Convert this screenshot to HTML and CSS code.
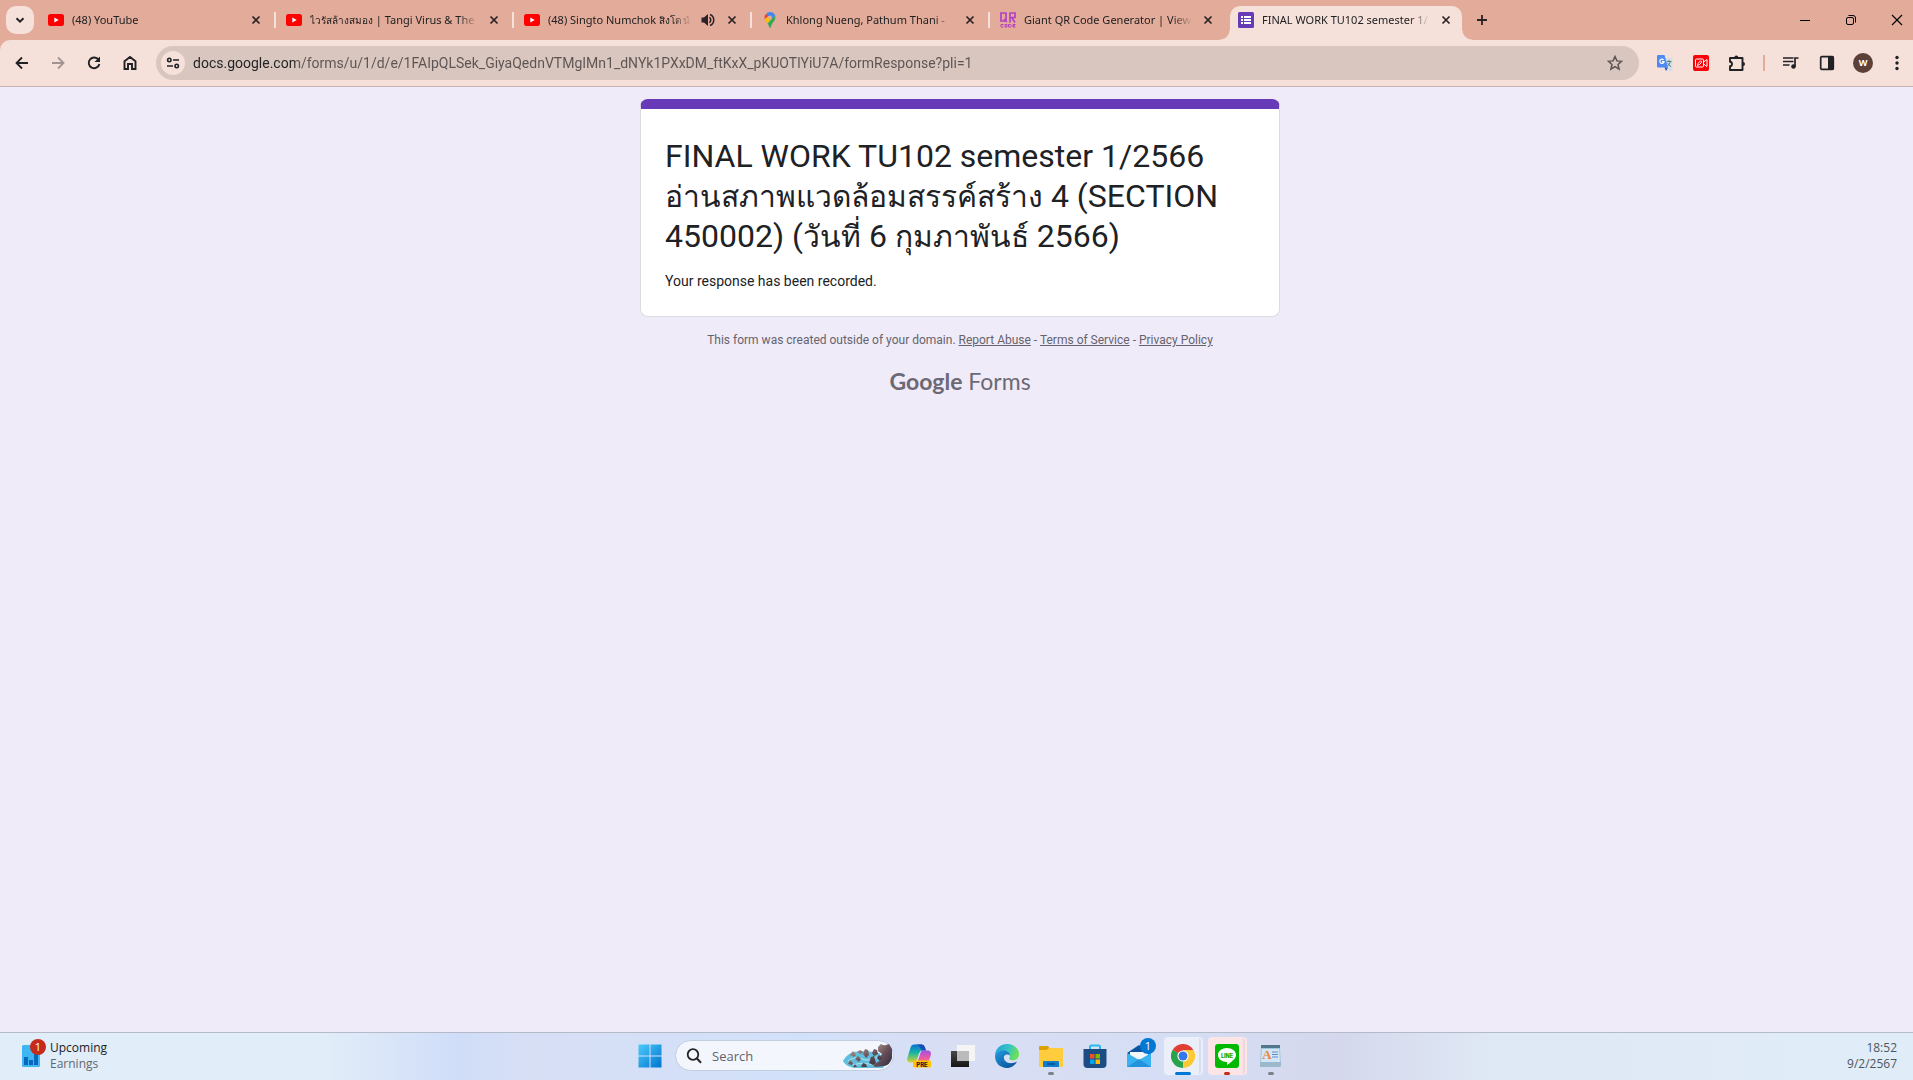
FILE: index.html
```html
<!DOCTYPE html>
<html lang="en">
<head>
<meta charset="utf-8">
<title>FINAL WORK TU102 semester 1/2566</title>
<link rel="stylesheet" href="styles.css">
</head>
<body>
<svg class="defs" width="0" height="0" aria-hidden="true">
  <symbol id="close" viewBox="0 0 16 16"><path d="M4.500 4.500l7 7M11.500 4.500l-7 7" fill="none" stroke="#2a2224" stroke-width="1.700"/></symbol>
  <symbol id="youtube" viewBox="0 0 16 16"><rect y="2" width="16" height="12" rx="2.500" fill="#f00"/><path d="M6.300 5.500v5l4.400-2.500z" fill="#fff"/></symbol>
</svg>

<header class="browser">
  <div class="tabstrip">
    <button class="tab-search" aria-label="Search tabs"><svg width="16" height="16" viewBox="0 0 16 16"><path d="M4.500 6.300L8 9.700l3.500-3.400" fill="none" stroke="#222" stroke-width="2"/></svg></button>
    <nav class="tabs" aria-label="Tabs">
      <div class="tab"><svg class="favicon"><use href="#youtube"/></svg><a class="tab-title" href="#">(48) YouTube</a><button class="close" aria-label="Close tab"><svg width="16" height="16"><use href="#close"/></svg></button></div>
      <div class="tab"><svg class="favicon"><use href="#youtube"/></svg><a class="tab-title" href="#"><span class="thai-small">ไวรัสล้างสมอง</span> | Tangi Virus &amp; The</a><button class="close" aria-label="Close tab"><svg width="16" height="16"><use href="#close"/></svg></button></div>
      <div class="tab"><svg class="favicon"><use href="#youtube"/></svg><a class="tab-title" href="#">(48) Singto Numchok <span class="thai-small">สิงโต นำ</span></a><button class="close" aria-label="Mute tab"><svg width="16" height="16" viewBox="0 0 16 16"><path d="M1.500 5.500H4L8 2v12l-4-3.500H1.500z" fill="#2a2224"/><path d="M9.500 5.300q2.500 2.700 0 5.400M10 2.500c5 2 5 9 0 11" fill="none" stroke="#2a2224" stroke-width="1.500"/></svg></button><button class="close" aria-label="Close tab"><svg width="16" height="16"><use href="#close"/></svg></button></div>
      <div class="tab"><svg class="favicon" viewBox="0 0 16 16"><path d="M8 0a5.500 5.500 0 0 1 5.200 3.800L8.400 8.500 4 2q1.600-2 4-2z" fill="#4285f4"/><path d="M4 2l3 2.500-3.600 4.300Q2.500 7 2.500 5.500 2.500 3.300 4 2z" fill="#ea4335"/><path d="M2.700 7L6.500 4l2.800 2.800-3.800 4.800Q3.200 9 2.700 7z" fill="#fbbc04"/><path d="M13.200 3.800c1.300 4.400-3.700 7-4.400 11.200q-.8 2-1.600 0c-.3-1.500-.7-2.300-1.700-3.600z" fill="#34a853"/><circle cx="8" cy="5.500" r="1.900" fill="#e3ab99"/></svg><a class="tab-title" href="#">Khlong Nueng, Pathum Thani -</a><button class="close" aria-label="Close tab"><svg width="16" height="16"><use href="#close"/></svg></button></div>
      <div class="tab"><svg class="favicon" viewBox="0 0 16 16"><path d="M1 1h5v8H1zM4 7l3 3M10 10.500V1h5v4.500h-5M12 6l3 4.500" fill="none" stroke="#b441c4" stroke-width="1.700"/><path d="M3.500 12.500H1v2.500h2.500M5 12.500h2v2.500H5zM8.500 12.500h2l.8 1.200-.8 1.300h-2zM15.500 12.500H13v2.500h2.500M13 13.700h2" fill="none" stroke="#b441c4"/></svg><a class="tab-title" href="#">Giant QR Code Generator | View</a><button class="close" aria-label="Close tab"><svg width="16" height="16"><use href="#close"/></svg></button></div>
      <div class="tab active"><svg class="favicon" viewBox="0 0 16 16"><rect width="16" height="16" rx="1.500" fill="#673ab7"/><path d="M3 4h2v2H3zM6 4h7v2H6zM3 7h2v2H3zM6 7h7v2H6zM3 10h2v2H3zM6 10h7v2H6z" fill="#fff"/></svg><a class="tab-title" href="#" aria-current="page">FINAL WORK TU102 semester 1/</a><button class="close" aria-label="Close tab"><svg width="16" height="16"><use href="#close"/></svg></button></div>
    </nav>
    <button class="new-tab" aria-label="New tab"><svg width="16" height="16" viewBox="0 0 16 16"><path d="M8 3v10M3 8h10" stroke="#2a2224" stroke-width="1.800"/></svg></button>
    <div class="window-controls">
      <button aria-label="Minimize"><svg width="12" height="12" viewBox="0 0 12 12"><path d="M1 6.500h10" stroke="#000"/></svg></button>
      <button aria-label="Restore"><svg width="12" height="12" viewBox="0 0 12 12"><rect x="1.500" y="3.500" width="7" height="7" rx="1.500" fill="none" stroke="#000"/><path d="M3.500 1.500H8A2.500 2.500 0 0 1 10.500 4v4.500" fill="none" stroke="#000"/></svg></button>
      <button aria-label="Close"><svg width="12" height="12" viewBox="0 0 12 12"><path d="M1 1l10 10M11 1L1 11" stroke="#000" stroke-width="1.100"/></svg></button>
    </div>
  </div>

  <div class="toolbar">
    <div class="nav-buttons">
      <button aria-label="Back"><svg width="16" height="16" viewBox="0 0 16 16"><path d="M14 8H3M8 2.500L2.500 8 8 13.500" fill="none" stroke="#202124" stroke-width="1.800"/></svg></button>
      <button aria-label="Forward"><svg width="16" height="16" viewBox="0 0 16 16"><path d="M2 8h11M8 2.500L13.500 8 8 13.500" fill="none" stroke="#a1938f" stroke-width="1.800"/></svg></button>
      <button aria-label="Reload"><svg width="16" height="16" viewBox="0 0 16 16"><path d="M12.600 4.800A5.400 5.400 0 1 0 13.400 9" fill="none" stroke="#202124" stroke-width="1.900"/><path d="M14 1.500V7H8.500z" fill="#202124"/></svg></button>
      <button aria-label="Home"><svg width="16" height="16" viewBox="0 0 16 16"><path d="M2.500 6.300L8 2l5.500 4.300V14H10V9H6v5H2.500z" fill="none" stroke="#202124" stroke-width="1.900"/></svg></button>
    </div>
    <div class="omnibox">
      <button class="site-info" aria-label="View site information"><svg width="16" height="16" viewBox="0 0 16 16"><g fill="none" stroke="#202124" stroke-width="1.600"><circle cx="4.300" cy="5" r="1.700"/><path d="M8 5h6M2 11h6"/><circle cx="11.700" cy="11" r="1.700"/></g></svg></button>
      <input class="url" type="text" aria-label="Address" value="docs.google.com/forms/u/1/d/e/1FAIpQLSek_GiyaQednVTMgIMn1_dNYk1PXxDM_ftKxX_pKUOTlYiU7A/formResponse?pli=1">
      <button class="bookmark" aria-label="Bookmark this tab"><svg width="16" height="16" viewBox="0 0 16 16"><path d="M8 1.500l1.900 4.400 4.700.4-3.600 3.100 1.100 4.700L8 11.600l-4.100 2.500L5 9.400 1.400 6.300l4.700-.4z" fill="none" stroke="#5c5352" stroke-width="1.500"/></svg></button>
    </div>
    <div class="actions">
      <button aria-label="Translate"><svg width="16" height="16" viewBox="0 0 16 16"><path d="M6 3h9.500v13H9z" fill="#d6dfe2"/><path d="M9.500 6.500h5M12 5v1.500M13.500 6.500q-1 3-3 4.500M10.500 8l3.500 4" stroke="#607d8b" fill="none"/><path d="M1 0h6.500l3.500 12.500H1a1 1 0 0 1-1-1V1a1 1 0 0 1 1-1z" fill="#4c8bf5"/><path d="M7.500 12.500H11L9 16z" fill="#2a56c6"/><path d="M6.600 5A2.100 2.100 0 1 0 7 6.600H5" fill="none" stroke="#fff" stroke-width="1.200"/></svg></button>
      <button aria-label="Screen recorder"><svg width="16" height="16" viewBox="0 0 16 16"><rect width="16" height="16" rx="2" fill="#fa0008"/><rect x="2.500" y="4" width="8" height="8" rx="1" fill="none" stroke="#fff"/><path d="M10.500 7L14 4.500v7L10.500 9M4.500 10.500L5 8.500l2.500-2.700 1.300 1.300L6.500 9.500z" fill="none" stroke="#fff"/></svg></button>
      <button aria-label="Extensions"><svg width="18" height="18" viewBox="0 0 18 18"><path d="M2 4h12.500v12H2v-3.700q2-.3 2-2.300t-2-2.300z" fill="none" stroke="#202124" stroke-width="1.900" stroke-linejoin="round"/><path d="M6.300 3.500a2 2 0 0 1 4 0zM15 8a2 2 0 0 1 0 4z" fill="#202124"/></svg></button>
      <span class="divider"></span>
      <button aria-label="Media control"><svg width="16" height="16" viewBox="0 0 16 16"><path d="M0 3h10.500M0 6.500h10.500M0 10h6.500" stroke="#202124" stroke-width="1.700"/><circle cx="10.500" cy="11.500" r="2.300" fill="#202124"/><path d="M12 11.500V3h3.500" fill="none" stroke="#202124" stroke-width="1.700"/></svg></button>
      <button aria-label="Side panel"><svg width="16" height="16" viewBox="0 0 16 16"><rect x="1.700" y="1.700" width="12.600" height="12.600" rx="1" fill="none" stroke="#202124" stroke-width="1.700"/><path d="M9 1.500h5.500v13H9z" fill="#202124"/></svg></button>
      <button aria-label="Profile"><span class="avatar">W</span></button>
      <button class="menu" aria-label="Menu"><svg width="16" height="16" viewBox="0 0 16 16" fill="#202124"><circle cx="8" cy="2.500" r="1.700"/><circle cx="8" cy="8" r="1.700"/><circle cx="8" cy="13.500" r="1.700"/></svg></button>
    </div>
  </div>
</header>

<main class="page">
  <section class="card">
    <h1>FINAL WORK TU102 semester 1/2566 <span class="thai">อ่านสภาพแวดล้อมสรรค์สร้าง</span> 4 (SECTION 450002) (<span class="thai">วันที่</span> 6 <span class="thai">กุมภาพันธ์</span> 2566)</h1>
    <p>Your response has been recorded.</p>
  </section>
  <p class="disclaimer">This form was created outside of your domain. <a href="#">Report Abuse</a> - <a href="#">Terms of Service</a> - <a href="#">Privacy Policy</a></p>
  <a class="brand" href="#"><b>Google</b> Forms</a>
</main>

<footer class="taskbar">
  <button class="widget">
    <span class="badge-host"><svg width="18" height="22" viewBox="0 0 18 22"><rect width="18" height="22" rx="1.500" fill="#3fb5f1"/><path d="M2 12h4v8H2zM7 15h4v5H7zM12 8h4v12h-4z" fill="#0868bd"/></svg><span class="badge red">1</span></span>
    <span class="widget-text"><span>Upcoming</span><span class="muted">Earnings</span></span>
  </button>
  <div class="apps">
    <button class="app" aria-label="Start"><svg width="24" height="24" viewBox="0 0 24 24"><defs><linearGradient id="win" x2="1" y2="1" gradientUnits="objectBoundingBox"><stop stop-color="#4ccbfb"/><stop offset="1" stop-color="#0073cf"/></linearGradient></defs><path d="M.5.500h11v11H.5zM12.500.500h11v11h-11zM.5 12.500h11v11H.5zM12.500 12.500h11v11h-11z" fill="url(#win)"/></svg></button>
    <label class="search">
      <svg width="16" height="16" viewBox="0 0 16 16"><circle cx="7" cy="6.500" r="5.300" fill="none" stroke="#252525" stroke-width="1.800"/><path d="M10.700 10.300l4.300 4.500" stroke="#252525" stroke-width="2"/></svg>
      <input type="text" placeholder="Search" aria-label="Search">
      <svg class="rocks" width="50" height="25" viewBox="0 0 50 25">
        <defs><linearGradient id="rock" x2="1" y2="1"><stop stop-color="#b49a92"/><stop offset=".5" stop-color="#675058"/><stop offset="1" stop-color="#30293d"/></linearGradient></defs>
        <path d="M0 18Q3 12 10 9l14-1 12 2 8 9-4 6H11Q2 23 0 18z" fill="#61bfdc"/><path d="M5 18q6-5 14-2t15-2M10 22q8-3 22 0" fill="none" stroke="#b0e6f1"/>
        <path d="M35 4l3-3q3 2 5 1l3-1 3 5v9q-2 7-8 8l-9 1-2-2 8-5-2-2 3-4-4-3z" fill="url(#rock)"/>
        <g fill="url(#rock)"><path d="M7 12l3-4 3 4-2 2zM14 9l3-2 3 2-2 2zM20 11l2-5 3 1 1 5-3 3zM29 10l2-4 3 1 1 4-4 2zM12 16l3-3 3 3-2 3zM26 20l2-6 3-1 2 7-3 2zM5 21l2-4 3 3-1 2zM18 24l2-4 3 1 1 3zM34 15l2-3 3 3-2 3zM10 24l2-3 2 3z"/></g>
      </svg>
    </label>
    <button class="app" aria-label="Copilot"><svg width="24" height="24" viewBox="0 0 24 24"><defs><linearGradient id="cpa" x2="0" y2="1"><stop stop-color="#0872d7"/><stop offset=".45" stop-color="#14b5a5"/><stop offset="1" stop-color="#d9d330"/></linearGradient><linearGradient id="cpb" x2="0" y2="1"><stop stop-color="#a34fe4"/><stop offset=".5" stop-color="#ee5c9e"/><stop offset="1" stop-color="#ffa35c"/></linearGradient></defs><path d="M7 .5h8q2 0 3 3l1 3h-4q-2 0-3 3l-2 6q-1 3-4 3H3q-4-1-2.500-5l3-10q1-3 3.500-3z" fill="url(#cpa)"/><path d="M8 .5h7q2 0 3 3l1 3h-4l-2-3q-1-3-5-3z" fill="#174db5"/><path d="M15 6.500h6q3 0 3 4l-3 9q-1 3-4 3H9l4-12q.5-3 2-4z" fill="url(#cpb)"/><rect x="6" y="16.500" width="18" height="7" rx="1.500" fill="#ffc400"/><text x="15" y="22.500" font-family="Inter, sans-serif" font-weight="800" font-size="6" text-anchor="middle" fill="#222">PRE</text></svg></button>
    <button class="app" aria-label="Task view"><svg width="24" height="24" viewBox="0 0 24 24"><defs><linearGradient id="tv" x2="0" y2="1"><stop stop-color="#484848"/><stop offset="1" stop-color="#151515"/></linearGradient></defs><rect y="7" width="18" height="16" fill="url(#tv)"/><rect x="6" y="1" width="18" height="16" fill="#f5f5f5"/><path d="M6 7h12v10H6z" fill="#bbb"/></svg></button>
    <button class="app" aria-label="Edge"><svg width="24" height="24" viewBox="0 0 24 24"><defs><linearGradient id="eg" x2="1" y2=".3"><stop stop-color="#239ce1"/><stop offset=".6" stop-color="#34c6c2"/><stop offset="1" stop-color="#6bdf58"/></linearGradient><linearGradient id="eb" x2="1" y2="1"><stop stop-color="#239be0"/><stop offset="1" stop-color="#064a91"/></linearGradient></defs><path d="M0 12C0 5 5 0 12 0s12 5 12 10-4 7-8 6c-3-1-1-2-1-4 0-3-3-5-7-5-5 0-8 3-8 6z" fill="url(#eg)"/><path d="M0 12C1 8 5 6.500 8 6.500c4 0 7 2 7 5-2-2-7-1-6 3 1 5 8 6 13 3-2 4-6 6.500-10 6.500C5 24 0 19 0 12z" fill="url(#eb)"/><path d="M9 11c-4 2-3 11 4 13-6-1-9-10-4-13z" fill="#073d84"/></svg></button>
    <button class="app running" aria-label="File Explorer"><svg width="24" height="24" viewBox="0 0 24 24"><path d="M0 3q0-1 1-1h8l2 3H9L7 7H0z" fill="#dca000"/><path d="M0 6h8l2-2h13q1 0 1 1v17q0 1-1 1H1q-1 0-1-1z" fill="#ffcc3e"/><path d="M4 23v-5q0-1 1-1h14q1 0 1 1v5z" fill="#117ccb"/><path d="M8 20h8" stroke="#075a9d" stroke-width="2"/></svg></button>
    <button class="app" aria-label="Microsoft Store"><svg width="24" height="24" viewBox="0 0 24 24"><path d="M7 6V3q0-1.500 1.500-1.500h7Q17 1.500 17 3v3" fill="none" stroke="#28b9ed" stroke-width="2"/><path d="M.5 5h23v15q0 4-4 4h-15q-4 0-4-4z" fill="#1c4c83"/><path d="M7 10h4.500v4.500H7z" fill="#f25022"/><path d="M12.500 10H17v4.500h-4.500z" fill="#7fba00"/><path d="M7 15.500h4.500V20H7z" fill="#00a4ef"/><path d="M12.500 15.500H17V20h-4.500z" fill="#ffb900"/></svg></button>
    <button class="app" aria-label="Mail"><span class="badge-host"><svg width="24" height="24" viewBox="0 0 24 24"><path d="M0 9L12 1l12 8-12 9z" fill="#0b55a0"/><path d="M3 8h18v5l-9 6-9-6z" fill="#f3f6fa"/><path d="M0 9l12 7 12-7v14H0z" fill="#38b3f0"/><path d="M0 23l12-8 12 8z" fill="#2393dd"/></svg><span class="badge blue">1</span></span></button>
    <button class="app running current" aria-label="Chrome"><svg width="24" height="24" viewBox="0 0 24 24"><path d="M12 12L1.600 6a12 12 0 0 1 20.800 0z" fill="#df3f34"/><path d="M12 12L1.600 6a12 12 0 0 0 10.400 18l5.200-9z" fill="#2ba24c"/><path d="M12 12l0 12a12 12 0 0 0 10.400-18H12z" fill="#fdc936"/><path d="M1.600 6L7 15l5-3z" fill="#2ba24c"/><circle cx="12" cy="12" r="5.600" fill="#fff"/><circle cx="12" cy="12" r="4.500" fill="#3478ec"/></svg></button>
    <button class="app running alert" aria-label="LINE"><svg width="24" height="24" viewBox="0 0 24 24"><rect width="24" height="24" rx="3" fill="#00b900"/><path d="M12 4c5 0 9 3 9 7 0 3-3 6-9 10v-3c-5 0-9-3-9-7s4-7 9-7z" fill="#fff"/><text x="12" y="13.500" font-family="Inter, sans-serif" font-size="5.500" font-weight="800" text-anchor="middle" fill="#00a900">LINE</text></svg></button>
    <button class="app running" aria-label="WordPad"><svg width="24" height="24" viewBox="0 0 24 24"><path d="M2 3h19l1 18H1z" fill="#9fc5df"/><path d="M3 5h17l1 13H2z" fill="#d3e6f5"/><path d="M2 1h19v3H2z" fill="#53788e"/><path d="M1 18h21v4l-1 1H1z" fill="#9bb8cd"/><text x="8" y="15" font-family="Liberation Serif, serif" font-size="13" font-weight="700" text-anchor="middle" fill="#ef8236">A</text><path d="M13 8h6M13 10.500h6M13 13h6" stroke="#5d91c9"/></svg></button>
  </div>
  <button class="clock"><span>18:52</span><span>9/2/2567</span></button>
</footer>
</body>
</html>
```
FILE: styles.css
```css
* { box-sizing: border-box; }

body {
  margin: 0;
  min-height: 100vh;
  display: flex;
  flex-direction: column;
  overflow-x: hidden;
  background: #f0ebf8;
  font-family: "Open Sans", "Noto Sans", sans-serif;
  font-size: 12px;
  color: #202124;
}

button {
  display: flex;
  align-items: center;
  justify-content: center;
  padding: 0;
  border: 0;
  background: none;
  font: inherit;
  color: inherit;
}

svg { display: block; flex: none; }
.defs { position: absolute; }

/* Tab strip */
.browser { background: #e3ab99; }
.tabstrip { display: flex; align-items: center; height: 40px; padding-left: 6px; }
.tab-search { width: 28px; height: 28px; border-radius: 10px; background: #f6e1da; }
.tabs { display: flex; align-self: stretch; margin-left: 4px; }
.tab {
  position: relative;
  display: flex;
  align-items: center;
  width: 238px;
  padding: 0 12px 0 10px;
}
.tab:not(.active)::after {
  content: "";
  position: absolute;
  right: 0;
  top: 12px;
  width: 2px;
  height: 16px;
  background: #f6e1da;
}
.tab:nth-last-child(2)::after { display: none; }
.tab.active::before {
  content: "";
  position: absolute;
  inset: 6px 4px 0 2px;
  border-radius: 10px 10px 0 0;
  background: #f6e1da;
}
.tab.active::after {
  content: "";
  position: absolute;
  inset: 30px -6px 0 -8px;
  background:
    radial-gradient(circle at 0 0, transparent 9px, #f6e1da 10px) left / 10px 10px no-repeat,
    radial-gradient(circle at 100% 0, transparent 9px, #f6e1da 10px) right / 10px 10px no-repeat;
}
.tab > * { position: relative; }
.favicon { width: 16px; height: 16px; }
.tab-title {
  flex: 1;
  min-width: 0;
  margin: 0 4px 0 8px;
  overflow: hidden;
  white-space: nowrap;
  line-height: 20px;
  color: inherit;
  text-decoration: none;
  font-family: "Noto Sans", sans-serif;
  font-size: 11px;
  mask-image: linear-gradient(to left, transparent 4px, #000 24px);
}
.thai-small { font-size: 10px; }
.close { width: 16px; height: 16px; }
.close + .close { margin-left: 8px; }
.new-tab { width: 28px; height: 28px; margin-left: 2px; }
.window-controls { display: flex; gap: 14px; margin-left: auto; }
.window-controls button { width: 32px; height: 40px; }

/* Toolbar */
.toolbar {
  display: flex;
  align-items: center;
  height: 47px;
  padding: 0 0 1px 4px;
  border-bottom: 1px solid #c8b5b2;
  border-radius: 10px 0 0 0;
  background: #f6e1da;
}
.nav-buttons { display: flex; }
.nav-buttons button, .actions button { width: 36px; height: 34px; }
.actions .menu { width: 32px; }
.omnibox {
  display: flex;
  align-items: center;
  flex: 1;
  height: 34px;
  margin-left: 8px;
  padding: 0 12px 0 5px;
  border-radius: 17px;
  background: #d8c6bf;
}
.site-info { width: 24px; height: 24px; border-radius: 12px; background: #f6e1da; }
.url {
  flex: 1;
  min-width: 0;
  padding: 0;
  margin-left: 8px;
  border: 0;
  font: 14px/20px Roboto, "Noto Sans", sans-serif;
  color: transparent;
  background: linear-gradient(90deg, #202124 102px, #5c5352 102px);
  background-clip: text;
}
.bookmark { width: 24px; height: 24px; }
.actions { display: flex; align-items: center; margin-left: 8px; }
.divider { width: 2px; height: 16px; margin: 0 8px; background: #e3ab99; }
.avatar {
  width: 20px;
  height: 20px;
  border-radius: 10px;
  background: #5d4037;
  color: #fff;
  font: 700 9px/20px "Open Sans", sans-serif;
}

/* Form confirmation */
.page {
  flex: 1;
  display: flex;
  flex-direction: column;
  align-items: center;
  padding: 12px 0 0 7px;
  font-family: Roboto, "Noto Sans", sans-serif;
}
.card {
  width: 640px;
  max-width: 90%;
  padding: 27px 24px 25px;
  border: 1px solid #dadce0;
  border-top: 10px solid #673ab7;
  border-radius: 8px;
  background: #fff;
}
.card h1 { margin: 0; font-size: 32px; font-weight: 400; line-height: 40px; }
.thai { font-size: 30px; line-height: 1; }
.card p { margin: 15px 0 0; font-size: 14px; line-height: 20px; }
.disclaimer { margin: 14px 0 0; line-height: 18px; color: #66636d; }
.disclaimer a { color: inherit; }
.brand {
  margin-top: 16px;
  font: 23px/32px Lato, sans-serif;
  color: #6c6975;
  text-decoration: none;
}

/* Taskbar */
.taskbar {
  display: grid;
  grid-template-columns: 1fr auto 1fr;
  align-items: center;
  height: 48px;
  padding: 0 0 2px 8px;
  border-top: 1px solid #b5bac8;
  background: linear-gradient(90deg, #e1edf8 0, #e1edf8 17%, #d0ddf8 24%, #d7dff5 28%, #d2e1fa 42%, #d9def3 50%, #d5def5 62%, #d5d8ec 70%, #dfe8f5 78%, #e0edf8 100%);
}
.widget { justify-self: start; gap: 10px; padding-left: 14px; text-align: left; }
.widget-text, .clock { display: flex; flex-direction: column; font: 12px/16px "Open Sans", sans-serif; }
.muted { color: #62676e; }
.badge-host { position: relative; }
.badge {
  position: absolute;
  top: -6px;
  left: 8px;
  width: 16px;
  height: 16px;
  border-radius: 8px;
  color: #fff;
  font: 11px/16px "Open Sans", sans-serif;
  text-align: center;
}
.red { background: #c42b1c; }
.blue { left: 13px; background: #0078d4; }
.apps { display: flex; align-items: center; }
.app { position: relative; width: 44px; height: 44px; }
.app > * { position: relative; }
.current::before, .alert::before {
  content: "";
  position: absolute;
  inset: 3px 6px 3px 3px;
  border-radius: 4px;
  background: #ebeff9;
  box-shadow: 3px 0 0 -1px #d7def0, 4px 0 0 #ebeff9;
}
.alert::before { background: #fde5e7; box-shadow: 3px 0 0 -1px #edd7df, 4px 0 0 #fde5e7; }
.running::after {
  content: "";
  position: absolute;
  bottom: 3px;
  width: 6px;
  height: 3px;
  border-radius: 2px;
  background: #7d828c;
}
.current::after { width: 16px; background: #0078d4; }
.alert::after { background: #c42b1c; }
.search {
  display: flex;
  align-items: center;
  width: 219px;
  height: 31px;
  margin: 0 3px;
  padding: 0 0 0 10px;
  border: 1px solid #c3cde2;
  border-radius: 16px;
  background: #f3f7fd;
}
.search input {
  flex: 1;
  min-width: 0;
  margin-left: 10px;
  padding: 0;
  border: 0;
  background: none;
  font: 13px/20px "Open Sans", sans-serif;
}
.search input::placeholder { color: #5f6368; opacity: 1; }
.clock { justify-self: end; align-items: flex-end; padding-right: 16px; color: #4f565d; }
```
